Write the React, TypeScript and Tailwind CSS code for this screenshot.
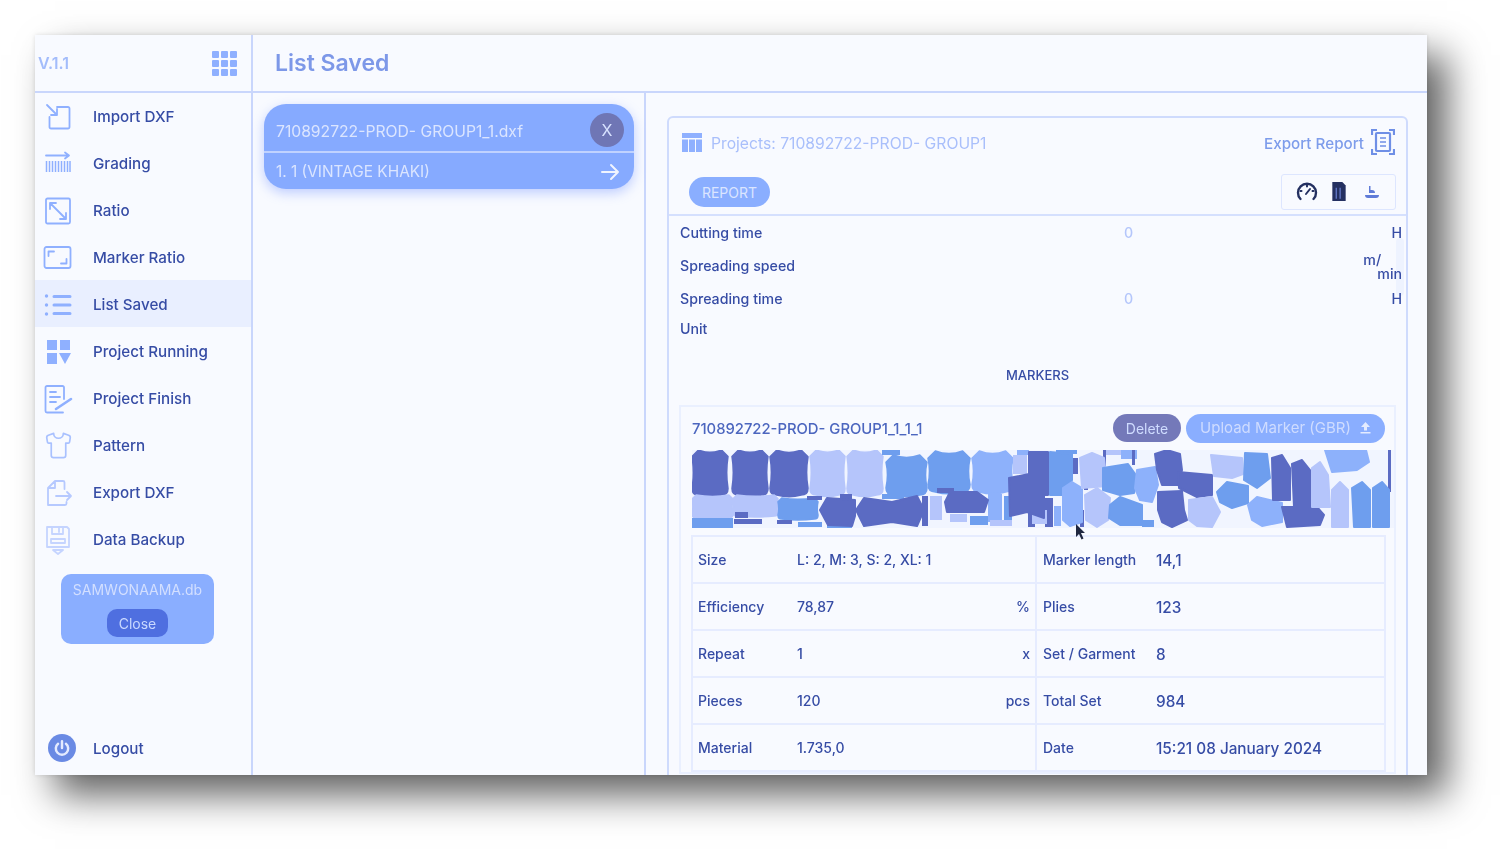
import { Shirt } from "lucide-react";
import type { ReactNode } from "react";

const ink = "#8fb0ff";

const Icon = ({ children, w = 30, h = 30 }: { children: ReactNode; w?: number; h?: number }) => (
  <svg width={w} height={h} viewBox="0 0 30 30" fill="none" stroke={ink} strokeWidth={1.8} strokeLinecap="round" strokeLinejoin="round">
    {children}
  </svg>
);

const navItems: { label: string; icon: ReactNode; active?: boolean }[] = [
  {
    label: "Import DXF",
    icon: (
      <Icon>
        <path d="M4 3 14 13M14 7v6H8" />
        <path d="M14 5h11a1.500 1.500 0 0 1 1.500 1.500V25a1.500 1.500 0 0 1-1.500 1.500H8A1.500 1.500 0 0 1 6.500 25V15" />
      </Icon>
    ),
  },
  {
    label: "Grading",
    icon: (
      <Icon>
        <path d="M3 6.500h23M22 3.500l4 3-4 3" />
        <path d="M3.500 12v11M6.500 12v11M9.500 12v11M12.500 12v11M15.500 12v11M18.500 12v11M21.500 12v11M24.500 12v11M27 12v11" strokeWidth={1.500} strokeLinecap="butt" />
      </Icon>
    ),
  },
  {
    label: "Ratio",
    icon: (
      <Icon>
        <rect x="3" y="2.500" width="24" height="25" rx="1.500" />
        <path d="M7 7l16 16M7 13V7h6M23 17v6h-6" />
      </Icon>
    ),
  },
  {
    label: "Marker Ratio",
    icon: (
      <Icon>
        <rect x="1.500" y="4" width="26" height="21" rx="2" />
        <path d="M5.500 13V8.500H11M23.500 16v4.500H18" />
      </Icon>
    ),
  },
  {
    label: "List Saved",
    active: true,
    icon: (
      <Icon>
        <circle cx="3.500" cy="6" r="1.700" fill={ink} stroke="none" />
        <circle cx="3.500" cy="15" r="1.700" fill={ink} stroke="none" />
        <circle cx="3.500" cy="24" r="1.700" fill={ink} stroke="none" />
        <path d="M11 6.500h16M11 15h16M11 23.500h16" strokeWidth={3} />
      </Icon>
    ),
  },
  {
    label: "Project Running",
    icon: (
      <Icon>
        <path d="M4 3h10v10H4zM17 3h10v10H17zM4 16h10v11H4z" fill={ink} stroke="none" />
        <path d="M16 16h12l-6 11z" fill={ink} stroke="none" />
      </Icon>
    ),
  },
  {
    label: "Project Finish",
    icon: (
      <Icon>
        <path d="M21 15V3.500A1.500 1.500 0 0 0 19.500 2H4a1.500 1.500 0 0 0-1.500 1.500V27A1.500 1.500 0 0 0 4 28.500h16" />
        <path d="M7 8h6M7 13h10M7 18h6" />
        <path d="M13 25l15-10" strokeWidth={2.600} />
      </Icon>
    ),
  },
  {
    label: "Pattern",
    icon: <Shirt size={29} color="#a9c1ff" strokeWidth={1.400} />,
  },
  {
    label: "Export DXF",
    icon: (
      <Icon>
        <path d="M5 27V10l7-7h8a1.500 1.500 0 0 1 1.500 1.500V11M5 27h17a1.500 1.500 0 0 0 1.500-1.500V24M12 3v7H5" stroke="#b6c9ff" />
        <path d="M13 18h15M24 14l4 4-4 4" stroke="#b6c9ff" />
      </Icon>
    ),
  },
  {
    label: "Data Backup",
    icon: (
      <Icon>
        <path d="M4 2h20l2 2v18H4z" stroke="#c5d4ff" />
        <path d="M9 2v7h11V2M16 3v4M8 14h14v4H8zM8 18h14" stroke="#c5d4ff" />
        <path d="M10 25h10l-5 4z" stroke="#c5d4ff" />
      </Icon>
    ),
  },
];

const NavRow = ({ label, icon, active }: { label: string; icon: ReactNode; active?: boolean }) => (
  <div className={`h-[47px] flex items-center pl-[8px] ${active ? "bg-[#e9efff]" : ""}`}>
    <div className="w-[30px] h-[32px] pt-[2px] flex items-center justify-center">{icon}</div>
    <span className="ml-[20px] pt-[4px] text-[15.200px] font-medium text-[#364ca5]">{label}</span>
  </div>
);

const piece = (x0: number, y0: number, x1: number, y1: number) => {
  const w = x1 - x0;
  const h = y1 - y0;
  const c = Math.min(w, h) * 0.18;
  return `M${x0 + c} ${y0}Q${x0 + w / 2} ${y0 + c * 0.7} ${x1 - c} ${y0}L${x1} ${y0 + c}Q${x1 - c * 0.4} ${y0 + h / 2} ${x1} ${y1 - c}Q${x1} ${y1} ${x1 - c} ${y1}Q${x0 + w / 2} ${y1 + c * 0.5} ${x0 + c} ${y1}Q${x0} ${y1} ${x0} ${y1 - c}Q${x0 + c * 0.4} ${y0 + h / 2} ${x0} ${y0 + c}Z`;
};

const D = "#5b6bc3";
const M = "#6e9eee";
const P = "#8db1fb";
const L = "#b5c5fb";

// straight-ish pattern pieces, given as a bounding box
const pieces: [number, number, number, number, string][] = [
  [0, 0, 36, 45, D], [40, 0, 76, 45, D], [78, 0, 116, 45, D], [118, 0, 153, 45, L], [155, 0, 191, 45, L],
  [194, 5, 235, 45, M], [236, 1, 278, 42, M], [280, 1, 321, 42, P], [0, 45, 41, 68, L], [41, 45, 86, 66, L],
  [86, 48, 126, 69, M],
];

// small strips and offcuts that fill the gaps between pieces
const strips: [number, number, number, number, string][] = [
  [0, 68, 41, 78, M], [42, 69, 70, 74, D], [43, 62, 56, 68, D], [85, 70, 100, 74, D], [106, 72, 130, 77, M], [135, 75, 160, 78, M],
  [115, 46, 130, 50, D], [148, 44, 160, 49, D], [190, 0, 208, 5, M], [190, 44, 212, 49, M], [230, 46, 236, 76, D],
  [238, 46, 250, 70, L], [245, 38, 262, 43, D], [296, 44, 310, 72, P], [312, 46, 320, 76, M], [258, 64, 275, 72, L],
  [278, 66, 296, 75, M], [298, 70, 320, 76, L], [336, 43, 343, 77, D], [346, 52, 352, 72, M], [353, 48, 361, 77, D],
  [321, 5, 335, 24, L], [325, 0, 337, 5, P], [362, 56, 369, 76, P], [380, 8, 386, 24, D], [364, 0, 385, 4, M],
  [392, 28, 396, 40, D], [412, 0, 430, 5, L], [411, 0, 414, 16, D], [429, 0, 445, 9, P], [440, 0, 443, 15, D],
  [450, 70, 462, 77, M], [696, 0, 699, 42, D], [340, 60, 355, 74, L], [388, 60, 392, 77, D],
];

// irregular garment outlines
const polys: [string, string][] = [
  ["128,60 135,48 163,50 163,66 160,76 136,75", D],
  ["164,60 172,48 200,52 225,46 232,60 225,76 200,72 172,76", D],
  ["258,42 285,42 296,50 292,62 255,62 253,52", D],
  ["317,28 337,24 337,2 356,2 356,45 352,45 352,68 335,62 318,66", D],
  ["358,2 380,4 380,30 372,45 358,45", M],
  ["371,38 380,32 390,38 390,72 378,76 371,70", P],
  ["388,8 400,3 412,8 415,36 390,38", L],
  ["393,45 405,38 418,48 416,70 405,77 394,70", L],
  ["411,18 436,14 446,28 442,43 428,45 411,40", M],
  ["445,20 463,17 466,35 460,52 448,50 443,38", P],
  ["463,4 475,0 488,4 490,20 486,35 470,35 465,20", D],
  ["486,22 520,25 520,45 505,47 487,38", D],
  ["466,42 490,41 492,60 495,70 480,77 470,72 466,60", D],
  ["519,5 550,8 551,24 540,28 522,26", L],
  ["553,3 575,4 578,28 565,38 552,30", M],
  ["525,42 535,32 556,36 556,53 540,58 528,52", M],
  ["497,50 520,47 528,62 520,77 505,76 497,70", L],
  ["418,55 428,47 450,55 450,75 428,75 417,68", M],
  ["556,55 565,47 590,53 590,72 570,76 560,70", P],
  ["590,57 625,57 632,65 628,75 595,77", D],
  ["580,8 590,5 598,18 598,50 581,50", D],
  ["600,14 610,10 618,20 618,57 602,57", D],
  ["620,18 628,12 636,25 638,57 620,57", L],
  ["633,0 674,0 677,12 665,20 640,22", P],
  ["640,40 648,32 656,40 656,77 640,77", L],
  ["660,38 670,32 678,40 678,77 662,77", M],
  ["681,38 690,32 697,40 697,77 681,77", M],
];

const MarkerPreview = () => (
  <svg width="702" height="78" viewBox="0 0 702 78" className="block">
    <rect width="702" height="78" fill="#f1f5ff" />
    {pieces.map(([a, b, c, d, col], i) => (
      <path key={i} d={piece(a, b, c, d)} fill={col} stroke={col} strokeWidth="1.500" strokeLinejoin="round" />
    ))}
    {strips.map(([a, b, c, d, col], i) => (
      <rect key={i} x={a} y={b} width={c - a} height={d - b} fill={col} />
    ))}
    {polys.map(([pts, col], i) => (
      <polygon key={i} points={pts} fill={col} stroke={col} strokeWidth="2" strokeLinejoin="round" />
    ))}
  </svg>
);

const Cell = ({ label, value, unit, left }: { label: string; value: string; unit?: string; left?: boolean }) => (
  <div className={`h-[47px] flex items-center border-b-2 border-[#e6ecff] text-[14px] font-medium text-[#364ca5] ${left ? "w-[344px] pl-[5px] pr-[5px] border-r-2" : "flex-1 pl-[6px]"}`}>
    <span className={left ? "w-[99px]" : "w-[113px]"}>{label}</span>
    <span className={`flex-1 ${left ? "" : "pt-[3px] text-[15.300px]"}`}>{value}</span>
    {unit && <span>{unit}</span>}
  </div>
);

const tableRows = [
  [["Size", "L: 2, M: 3, S: 2, XL: 1", ""], ["Marker length", "14,1"]],
  [["Efficiency", "78,87", "%"], ["Plies", "123"]],
  [["Repeat", "1", "x"], ["Set / Garment", "8"]],
  [["Pieces", "120", "pcs"], ["Total Set", "984"]],
  [["Material", "1.735,0", ""], ["Date", "15:21 08 January 2024"]],
];

const SummaryRow = ({ label, value, unit, h }: { label: string; value?: string; unit?: ReactNode; h: string }) => (
  <div className={`${h} relative flex items-center pl-[11px] pr-[4px] text-[14.200px] font-medium text-[#364ca5]`}>
    <span className="w-[444px]">{label}</span>
    <span className="flex-1 text-[#b4c6fb]">{value}</span>
    {unit}
  </div>
);

export default function App() {
  return (
    <div className="w-[1500px] h-[849px] bg-white pl-[35px] pt-[35px] overflow-hidden font-['Inter',sans-serif]">
      <div className="w-[1392px] h-[740px] flex overflow-hidden bg-[#f8faff] blur-[0.4px] shadow-[20px_20px_36px_rgba(0,0,0,0.62),0_0_5px_rgba(0,0,0,0.12)]">
        <aside className="w-[218px] shrink-0 flex flex-col border-r-2 border-[#c9d6fc]">
          <div className="h-[58px] shrink-0 flex items-center justify-between pl-[3px] pr-[14px] border-b-2 border-[#c9d6fc]">
            <span className="text-[16px] font-semibold text-[#a3bcfb]">V.1.1</span>
            <div className="grid grid-cols-3 gap-[2px]">
              {Array.from({ length: 9 }).map((_, i) => (
                <div key={i} className="w-[7px] h-[7px] rounded-[1px] bg-[#8fb0ff]" />
              ))}
            </div>
          </div>
          <div className="-mt-[1px]">
            {navItems.map((item) => (
              <NavRow key={item.label} {...item} />
            ))}
          </div>
          <div className="mt-[12px] ml-[26px] w-[153px] h-[70px] rounded-[10px] bg-[#8aaeff] flex flex-col items-center pt-[7px]">
            <span className="text-[14px] text-[#d3dfff] leading-[17px]">SAMWONAAMA.db</span>
            <div className="mt-[11px] w-[61px] h-[28px] rounded-[10px] bg-[#4f6fe0] flex items-center justify-center text-[14px] text-[#c9d8ff]">
              Close
            </div>
          </div>
          <div className="mt-auto h-[54px] flex items-center pl-[13px]">
            <div className="w-[28px] h-[28px] rounded-full bg-[#6a8ae4] flex items-center justify-center">
              <svg width="18" height="18" viewBox="0 0 16 16" fill="none" stroke="#e4ebff" strokeWidth="2.200" strokeLinecap="round">
                <path d="M8 2v6M4.500 4.200a5.500 5.500 0 1 0 7 0" />
              </svg>
            </div>
            <span className="ml-[17px] pt-[2px] text-[15.200px] font-medium text-[#364ca5]">Logout</span>
          </div>
        </aside>

        <main className="flex-1 flex flex-col min-w-0">
          <header className="h-[58px] shrink-0 flex items-center pl-[22px] border-b-2 border-[#c9d6fc]">
            <h1 className="text-[23px] font-semibold text-[#7d98e8]">List Saved</h1>
          </header>
          <div className="flex-1 flex min-h-0">
            <section className="w-[393px] shrink-0 border-r-2 border-[#c9d6fc] pl-[11px] pt-[11px]">
              <div className="w-[370px] h-[85px] rounded-[22px] bg-[#86aaff] shadow-[0_4px_12px_rgba(120,150,255,0.45)] text-[#dbe5ff] text-[15.700px]">
                <div className="h-[49px] flex items-center justify-between pl-[12px] pr-[10px] pt-[8px] border-b-2 border-[#c0d2ff]">
                  <span>710892722-PROD- GROUP1_1.dxf</span>
                  <div className="w-[34px] h-[34px] -mt-[4px] rounded-full bg-[#6f76b5] flex items-center justify-center text-[16px] text-[#d8e2ff]">X</div>
                </div>
                <div className="h-[36px] pt-[2px] flex items-center justify-between pl-[12px] pr-[14px] text-[15.400px]">
                  <span>1. 1 (VINTAGE KHAKI)</span>
                  <svg width="20" height="20" viewBox="0 0 20 20" fill="none" stroke="#f0f4ff" strokeWidth="2" strokeLinecap="round" strokeLinejoin="round">
                    <path d="M2 10h16M11 3l7 7-7 7" />
                  </svg>
                </div>
              </div>
            </section>

            <section className="flex-1 min-w-0 pl-[21px] pr-[19px] pt-[23px]">
              <div className="relative h-[700px] border-2 border-[#cfdbfd] rounded-t-[6px] overflow-hidden">
                <div className="absolute right-[2px] top-[120px] w-[8px] h-[58px] rounded-full bg-[#eef3ff]" />
                <div className="h-[98px] border-b-2 border-[#d5e0fe] relative">
                  <div className="flex items-center justify-between pl-[12px] pr-[11px] pt-[10px]">
                    <div className="flex items-center gap-[8px]">
                      <svg width="22" height="22" viewBox="0 0 22 22" fill="#8fb0ff">
                        <path d="M1 2h20v5H1zM1 8.500h6V21H1zM8 8.500h6V21H8zM15 8.500h6V21h-6z" />
                      </svg>
                      <span className="text-[15.700px] pt-[3px] text-[#a9bffb]">Projects: 710892722-PROD- GROUP1</span>
                    </div>
                    <div className="flex items-center gap-[7px]">
                      <span className="text-[15.200px] pt-[5px] font-medium text-[#7d9ceb]">Export Report</span>
                      <svg width="24" height="28" viewBox="0 0 24 28" fill="none" stroke="#6f8fe6" strokeWidth="2.200">
                        <path d="M1 7V2h5M18 2h5v5M1 21v5h5M18 26h5v-5" />
                        <rect x="5" y="5" width="14" height="18" rx="1" />
                        <path d="M9 10h6M9 14h6M9 18h6" strokeWidth="1.700" />
                      </svg>
                    </div>
                  </div>
                  <div className="absolute left-[20px] top-[59px] w-[81px] h-[30px] rounded-full bg-[#8aaeff] flex items-center justify-center text-[14px] text-[#dbe5ff]">
                    REPORT
                  </div>
                  <div className="absolute right-[10px] top-[56px] w-[115px] h-[36px] border border-[#dde6ff] rounded-[3px] flex items-center pl-[14px] gap-[13px]">
                    <svg width="22" height="20" viewBox="0 0 22 20" fill="none" stroke="#243061" strokeWidth="2.400" strokeLinecap="round" className="-mt-[3px]">
                      <path d="M4.500 18a9 9 0 1 1 13 0" />
                      <path d="M10 13l4-5M4.500 10h1M16.500 10h1M11 4.500v1" strokeWidth="2" />
                    </svg>
                    <svg width="16" height="20" viewBox="0 0 14 18" fill="#243061" className="-mt-[2px]">
                      <path d="M1 1h9l3 3v14H1z" />
                      <path d="M4 6h1v10H4zM7.500 6h1v10h-1z" fill="#6f86dc" />
                    </svg>
                    <svg width="16" height="14" viewBox="0 0 16 14" fill="#5f7bd8" className="ml-[4px]">
                      <path d="M5 1h1.500v4H8c2 0 3 1 3 3H5zM1 10h14c0 2-1 3-3 3H4c-2 0-3-1-3-3z" />
                    </svg>
                  </div>
                </div>

                <SummaryRow h="h-[33px]" label="Cutting time" value="0" unit={<span>H</span>} />
                <SummaryRow
                  h="h-[33px]"
                  label="Spreading speed"
                  unit={
                    <span className="leading-[14px] pt-[2px]">
                      m/
                      <br />
                      <span className="ml-[14px]">min</span>
                    </span>
                  }
                />
                <SummaryRow h="h-[33px]" label="Spreading time" value="0" unit={<span>H</span>} />
                <SummaryRow h="h-[27px]" label="Unit" />
                <div className="h-[63px] pt-[5px] flex items-center justify-center text-[13px] font-medium text-[#364ca5]">MARKERS</div>

                <div className="ml-[10px] w-[717px] border-2 border-[#eaf0ff] pl-[11px]">
                  <div className="h-[43px] flex items-center justify-between pr-[9px]">
                    <span className="pt-[2px] text-[14.800px] font-medium text-[#4c66bf]">710892722-PROD- GROUP1_1_1_1</span>
                    <div className="-mt-[1px] flex items-center gap-[5px] text-[15px] text-[#cfdcff]">
                      <div className="w-[68px] h-[28px] rounded-full bg-[#7479b9] flex items-center justify-center text-[14px]">Delete</div>
                      <div className="w-[199px] h-[29px] rounded-full bg-[#8aaeff] flex items-center justify-center gap-[9px]">
                        Upload Marker (GBR)
                        <svg width="11" height="12" viewBox="0 0 11 12" fill="#e4ebff">
                          <path d="M5.500 0 10 5H7v3.500H4V5H1zM0.500 10h10v1.500H.5z" />
                        </svg>
                      </div>
                    </div>
                  </div>
                  <MarkerPreview />
                  <div className="mt-[7px] -ml-[1px] w-[695px] border-2 border-b-0 border-[#e6ecff]">
                    {tableRows.map((row) => (
                      <div key={row[0][0]} className="flex">
                        <Cell left label={row[0][0]} value={row[0][1]} unit={row[0][2]} />
                        <Cell label={row[1][0]} value={row[1][1]} />
                      </div>
                    ))}
                  </div>
                </div>

                <svg width="12" height="18" viewBox="0 0 12 18" className="absolute left-[406px] top-[405px]" fill="#1f2740">
                  <path d="M1 1v13l3-3 2.500 5.500 2-1L6 10h4z" />
                </svg>
              </div>
            </section>
          </div>
        </main>
      </div>
    </div>
  );
}
